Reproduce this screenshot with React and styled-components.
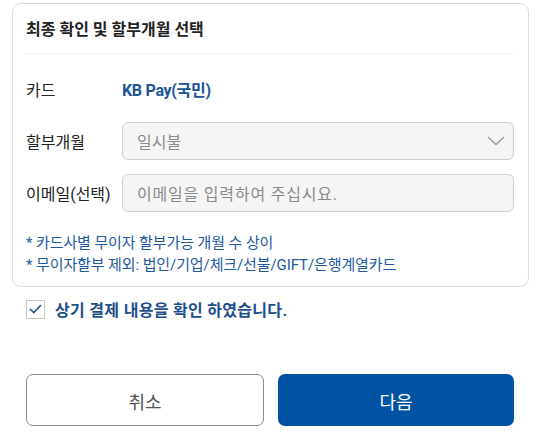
import React from "react";
import styled, { createGlobalStyle } from "styled-components";

const Global = createGlobalStyle`
  html, body {
    margin: 0;
    padding: 0;
    background: #fff;
    font-family: Roboto, "Noto Sans CJK KR", "Noto Sans", sans-serif;
  }
`;

const Page = styled.div`
  width: 540px;
  padding: 3px 11px 0 12px;
  box-sizing: border-box;
`;

const Card = styled.section`
  border: 1px solid #dcdcdc;
  border-radius: 9px;
  padding: 0 14px 10px 13px;
`;

const Title = styled.h2`
  margin: 0;
  padding: 14px 0 11px;
  font-size: 16px;
  line-height: 24px;
  font-weight: 700;
  color: #222;
  border-bottom: 1px solid #f0f0f0;
`;

const Rows = styled.div`
  display: flex;
  flex-direction: column;
  gap: 14px;
  margin-top: 16px;
`;

const Row = styled.div`
  display: flex;
  align-items: center;
  height: 38px;
`;

const Label = styled.span`
  width: 96px;
  flex: none;
  font-size: 16px;
  color: #222;
`;

const CardName = styled.span`
  font-size: 16px;
  font-weight: 700;
  color: #1c5595;
  letter-spacing: -0.3px;
`;

const Field = styled.div`
  flex: 1;
  height: 38px;
  box-sizing: border-box;
  display: flex;
  align-items: center;
  justify-content: space-between;
  padding: 0 8px 0 14px;
  background: #f5f5f5;
  border: 1px solid #cfcfcf;
  border-radius: 6px;
  font-size: 16px;
  color: #8a8a8a;
  letter-spacing: ${(p) => (p.$spaced ? "0.8px" : "0")};
`;

const Notes = styled.ul`
  list-style: none;
  margin: 20px 0 0;
  padding: 0;
  font-size: 15px;
  line-height: 22px;
  color: #1e5aa0;
  letter-spacing: -0.1px;
`;

const Agree = styled.label`
  display: flex;
  align-items: center;
  gap: 10px;
  margin: 12px 0 0 14px;
  height: 20px;
  font-size: 16px;
  font-weight: 700;
  color: #1c4f8a;
  letter-spacing: 0.3px;
`;

const Box = styled.span`
  width: 19px;
  height: 19px;
  box-sizing: border-box;
  border: 1px solid #c8c8c8;
  display: flex;
  align-items: center;
  justify-content: center;
`;

const Buttons = styled.div`
  display: flex;
  gap: 14px;
  margin: 55px 15px 0 14px;
`;

const Button = styled.button`
  flex: 1;
  height: 52px;
  border-radius: 7px;
  font-family: inherit;
  font-size: 18px;
  padding-top: 3px;
  border: ${(p) => (p.$primary ? "none" : "1.5px solid #8c8c8c")};
  background: ${(p) => (p.$primary ? "#0153a3" : "#fff")};
  color: ${(p) => (p.$primary ? "#fff" : "#555")};
`;

export default function App() {
  return (
    <Page>
      <Global />
      <Card>
        <Title>최종 확인 및 할부개월 선택</Title>
        <Rows>
          <Row>
            <Label>카드</Label>
            <CardName>KB Pay(국민)</CardName>
          </Row>
          <Row>
            <Label>할부개월</Label>
            <Field>
              일시불
              <svg width="18" height="10" viewBox="0 0 18 10">
                <path d="M1 1l8 7.5L17 1" fill="none" stroke="#9a9a9a" strokeWidth="1.3" />
              </svg>
            </Field>
          </Row>
          <Row>
            <Label>이메일(선택)</Label>
            <Field $spaced>이메일을 입력하여 주십시요.</Field>
          </Row>
        </Rows>
        <Notes>
          <li>* 카드사별 무이자 할부가능 개월 수 상이</li>
          <li>* 무이자할부 제외: 법인/기업/체크/선불/GIFT/은행계열카드</li>
        </Notes>
      </Card>
      <Agree>
        <Box>
          <svg width="13" height="10" viewBox="0 0 13 10">
            <path d="M1 5l3.8 3.6L12 1" fill="none" stroke="#1c5595" strokeWidth="1.6" />
          </svg>
        </Box>
        상기 결제 내용을 확인 하였습니다.
      </Agree>
      <Buttons>
        <Button>취소</Button>
        <Button $primary>다음</Button>
      </Buttons>
    </Page>
  );
}
